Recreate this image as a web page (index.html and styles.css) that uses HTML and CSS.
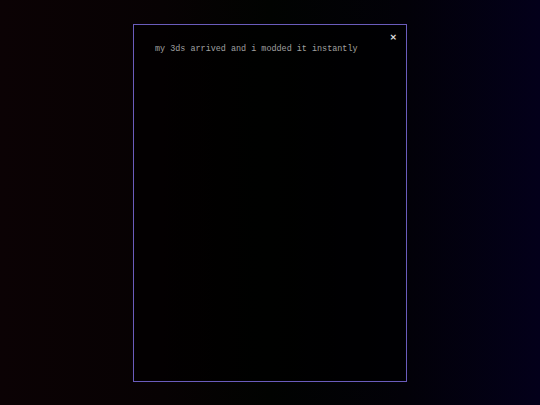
FILE: index.html
```html
<!DOCTYPE html>
<html>
<head>
<meta charset="utf-8">
<link rel="stylesheet" href="styles.css">
</head>
<body>
<div class="stage">
  <div class="dialog">
    <div class="dialog-head">
      <span class="close">×</span>
    </div>
    <p class="message">my 3ds arrived and i modded it instantly</p>
  </div>
</div>
</body>
</html>
```
FILE: styles.css
```css
html, body {
  margin: 0;
  padding: 0;
  height: 100%;
}
body {
  background: linear-gradient(90deg, #0b0204 0%, #070203 30%, #010301 50%, #020108 75%, #03001a 100%);
  font-family: "Liberation Mono", monospace;
}
.stage {
  height: 100%;
  display: flex;
  align-items: center;
  justify-content: center;
}
.dialog {
  box-sizing: border-box;
  width: 274px;
  height: 358px;
  border: 1px solid #6a5cbc;
  background: rgba(0, 0, 0, 0.55);
  padding: 6px 9px 0 21px;
}
.dialog-head {
  display: flex;
  justify-content: flex-end;
  height: 12px;
}
.close {
  color: #e0e0e0;
  font-family: "DejaVu Sans", sans-serif;
  font-size: 9px;
  font-weight: bold;
  line-height: 12px;
}
.message {
  margin: 1px 0 0 0;
  color: #a0a0a0;
  font-size: 8.45px;
  line-height: 10px;
}
```
